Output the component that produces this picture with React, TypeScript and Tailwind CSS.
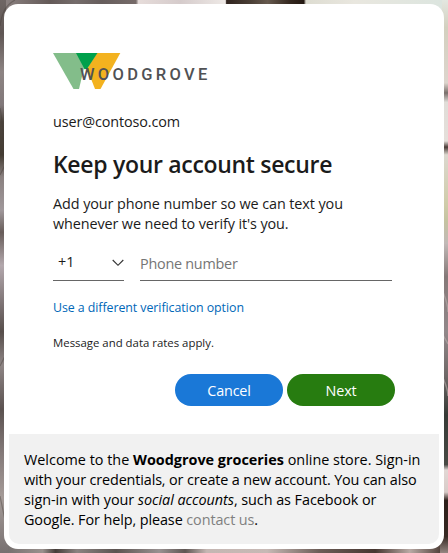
import React from "react";

function Backdrop() {
  return (
    <svg className="absolute inset-0 h-full w-full" viewBox="0 0 448 553" preserveAspectRatio="none" aria-hidden="true">
      <defs>
        <linearGradient id="left" x1="0" y1="0" x2="0" y2="1">
          <stop offset="0" stopColor="#6f6664" />
          <stop offset="0.06" stopColor="#5f5654" />
          <stop offset="0.13" stopColor="#8d8483" />
          <stop offset="0.19" stopColor="#81787a" />
          <stop offset="0.22" stopColor="#4c443d" />
          <stop offset="0.28" stopColor="#443c33" />
          <stop offset="0.32" stopColor="#8a8180" />
          <stop offset="0.38" stopColor="#a0989b" />
          <stop offset="0.42" stopColor="#685d5a" />
          <stop offset="0.48" stopColor="#b3a8ad" />
          <stop offset="0.53" stopColor="#8c8284" />
          <stop offset="0.6" stopColor="#574e4b" />
          <stop offset="0.66" stopColor="#8e8585" />
          <stop offset="0.74" stopColor="#5b5250" />
          <stop offset="0.82" stopColor="#847a79" />
          <stop offset="0.9" stopColor="#a59b98" />
          <stop offset="1" stopColor="#777070" />
        </linearGradient>
        <linearGradient id="right" x1="0" y1="0" x2="0" y2="1">
          <stop offset="0" stopColor="#e3e7e0" />
          <stop offset="0.05" stopColor="#d3d0bf" />
          <stop offset="0.15" stopColor="#ddd5cd" />
          <stop offset="0.168" stopColor="#796f6b" />
          <stop offset="0.185" stopColor="#e0ddd8" />
          <stop offset="0.255" stopColor="#e5dfda" />
          <stop offset="0.266" stopColor="#493b36" />
          <stop offset="0.28" stopColor="#dcd8cf" />
          <stop offset="0.37" stopColor="#cfcca9" />
          <stop offset="0.4" stopColor="#c5c3a1" />
          <stop offset="0.44" stopColor="#c1b9b7" />
          <stop offset="0.5" stopColor="#857978" />
          <stop offset="0.6" stopColor="#92888a" />
          <stop offset="0.68" stopColor="#6f6867" />
          <stop offset="0.75" stopColor="#363a36" />
          <stop offset="0.84" stopColor="#484a45" />
          <stop offset="0.85" stopColor="#e2d8d5" />
          <stop offset="0.89" stopColor="#d8cbc8" />
          <stop offset="0.905" stopColor="#2c1f1a" />
          <stop offset="0.97" stopColor="#372923" />
          <stop offset="1" stopColor="#958782" />
        </linearGradient>
        <linearGradient id="top" x1="0" y1="0" x2="1" y2="0">
          <stop offset="0" stopColor="#8a807f" />
          <stop offset="0.1" stopColor="#645a58" />
          <stop offset="0.16" stopColor="#756c6b" />
          <stop offset="0.22" stopColor="#665d5c" />
          <stop offset="0.298" stopColor="#766b69" />
          <stop offset="0.304" stopColor="#e6dcda" />
          <stop offset="0.4" stopColor="#d5cbcb" />
          <stop offset="0.503" stopColor="#eee9e6" />
          <stop offset="0.506" stopColor="#30231e" />
          <stop offset="0.56" stopColor="#493e35" />
          <stop offset="0.6" stopColor="#66594e" />
          <stop offset="0.65" stopColor="#352820" />
          <stop offset="0.683" stopColor="#241812" />
          <stop offset="0.688" stopColor="#dddcd1" />
          <stop offset="0.8" stopColor="#e9e7df" />
          <stop offset="1" stopColor="#dce5df" />
        </linearGradient>
        <linearGradient id="bottom" x1="0" y1="0" x2="1" y2="0">
          <stop offset="0" stopColor="#777170" />
          <stop offset="0.08" stopColor="#9a918e" />
          <stop offset="0.11" stopColor="#453d39" />
          <stop offset="0.16" stopColor="#8b8381" />
          <stop offset="0.25" stopColor="#5b5350" />
          <stop offset="0.35" stopColor="#999191" />
          <stop offset="0.41" stopColor="#5f5653" />
          <stop offset="0.46" stopColor="#c5b7b3" />
          <stop offset="0.6" stopColor="#c7b9b5" />
          <stop offset="0.72" stopColor="#6c5d57" />
          <stop offset="0.85" stopColor="#463630" />
          <stop offset="0.93" stopColor="#b9aaa5" />
          <stop offset="1" stopColor="#54443e" />
        </linearGradient>
      </defs>
      <rect width="224" height="553" fill="url(#left)" />
      <rect x="224" width="224" height="553" fill="url(#right)" />
      <rect x="6" width="436" height="12" fill="url(#top)" />
      <rect x="8" y="540" width="432" height="13" fill="url(#bottom)" />
      <path d="M0 26C2 12 6 5 15 0M0 108Q4 128 4 160M0 366l5-10M0 496Q4 515 7 530M0 175l5-10" fill="none" stroke="#443b38" strokeWidth="1.2" opacity=".4" />
      <path d="M443 292q5 12 5 20M443 378q5 11 5 18M443 335l5 9" fill="none" stroke="#b9adac" strokeWidth="1.5" opacity=".6" />
    </svg>
  );
}

function Logo() {
  return (
    <div className="relative h-9 w-[157px]" role="img" aria-label="Woodgrove">
      <svg className="h-9 w-[68px]" viewBox="0 0 68 36" aria-hidden="true">
        <path d="M0 0H24L31 15L26 36H20.5Z" fill="#83bd8a" />
        <path d="M44 0H67.3L47.5 36H42L34 15.5Z" fill="#f3b21f" />
        <path d="M23 0H44.5L33.8 16.2Q32.6 15.8 31.5 16.2Z" fill="#00a04b" />
      </svg>
      <span className="absolute left-[27px] top-[14px] whitespace-nowrap font-[Roboto] text-[16.5px] font-medium leading-4 tracking-[3.3px] text-[#505154]">WOODGROVE</span>
    </div>
  );
}

export default function App() {
  return (
    <div className="relative h-[553px] w-[448px] overflow-hidden p-1 font-['Open_Sans','Noto_Sans',sans-serif] text-[14.4px] leading-5 text-[#1b1b1b]">
      <Backdrop />
      <main className="relative flex h-[545px] w-[440px] flex-col rounded-[14px] bg-white p-[5px]">
        <div className="flex h-[425px] flex-col pl-11 pt-11">
          <Logo />
          <p className="mt-[23px] whitespace-nowrap tracking-[-0.12px]">user@contoso.com</p>
          <h1 className="mt-[16px] whitespace-nowrap text-[23px] font-semibold leading-8 tracking-[-0.31px]">Keep your account secure</h1>
          <div className="mt-[14px] whitespace-nowrap">
            <p className="tracking-[-0.08px]">Add your phone number so we can text you</p>
            <p className="tracking-[-0.11px]">whenever we need to verify it's you.</p>
          </div>
          <div className="mt-[11px] flex gap-4">
            <button className="flex h-[36px] w-[71px] items-start justify-between border-b border-[#666] pl-[5px] pt-[7px] leading-5">
              <span>+1</span>
              <svg className="mt-[6px] h-[10px] w-3" viewBox="0 0 12 10" fill="none" stroke="#333" strokeWidth="1.15" aria-hidden="true">
                <path d="M.7 2 6 7.3 11.3 2" />
              </svg>
            </button>
            <input className="h-[36px] w-[252px] border-b border-[#666] pt-[1px] tracking-[-0.25px] outline-none placeholder:text-[#757575]" placeholder="Phone number" aria-label="Phone number" />
          </div>
          <a className="mt-[17px] whitespace-nowrap text-[12.4px] leading-5 tracking-[-0.07px] text-[#0067b8]">Use a different verification option</a>
          <p className="mt-[15px] whitespace-nowrap text-[11.4px] leading-5">Message and data rates apply.</p>
          <div className="mt-[21px] flex gap-1 pl-[122px] text-white">
            <button className="h-8 w-[108px] rounded-full bg-[#1a78d7] pt-0.5 font-medium tracking-[-0.2px]">Cancel</button>
            <button className="h-8 w-[108px] rounded-full bg-[#277c10] pt-0.5 font-medium tracking-[-0.2px]">Next</button>
          </div>
        </div>
        <footer className="h-[110px] w-[430px] whitespace-nowrap rounded-b-[10px] bg-[#f1f1f1] pl-[15px] pt-4 text-black">
          <p>Welcome to the <b>Woodgrove groceries</b> online store. Sign-in</p>
          <p className="tracking-[-0.13px]">with your credentials, or create a new account. You can also</p>
          <p className="tracking-[-0.05px]">sign-in with your <i>social accounts</i>, such as Facebook or</p>
          <p className="tracking-[-0.09px]">Google. For help, please <a className="text-[#808080]">contact us</a>.</p>
        </footer>
      </main>
    </div>
  );
}
